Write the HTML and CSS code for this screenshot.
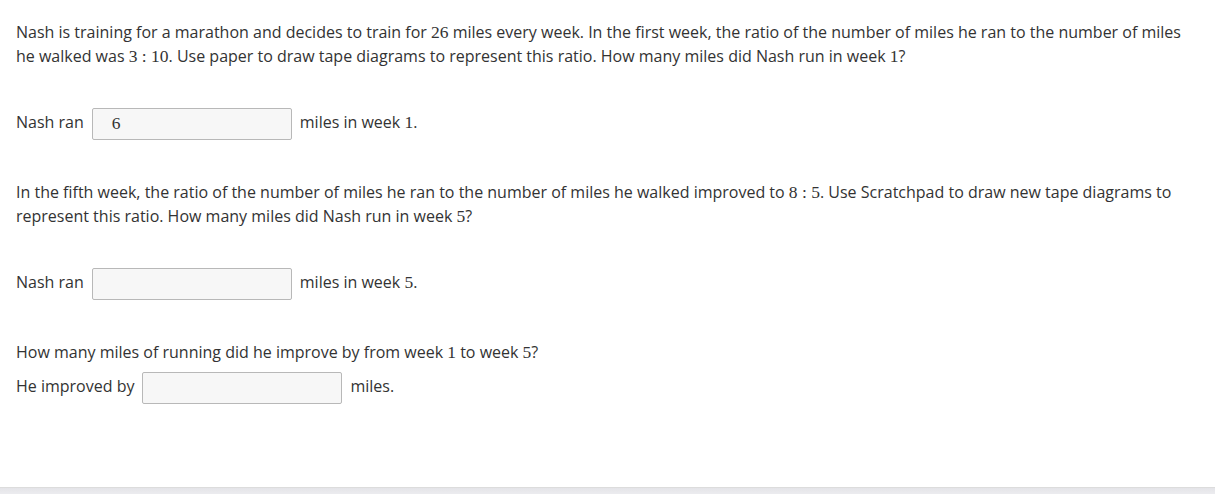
FILE: index.html
```html
<!DOCTYPE html>
<html>
<head>
<meta charset="utf-8">
<link rel="stylesheet" href="styles.css">
</head>
<body>
<main class="question">
  <p class="para">Nash is training for a marathon and decides to train for <span class="m">26</span> miles every week. In the first week, the ratio of the number of miles he ran to the number of miles he walked was <span class="m">3 : 10</span>. Use paper to draw tape diagrams to represent this ratio. How many miles did Nash run in week <span class="m">1</span>?</p>
  <div class="row"><span class="lbl">Nash ran</span><div class="input"><span class="m">6</span></div><span class="lbl">miles in week <span class="m">1</span>.</span></div>
  <p class="para">In the fifth week, the ratio of the number of miles he ran to the number of miles he walked improved to <span class="m">8 : 5</span>. Use Scratchpad to draw new tape diagrams to represent this ratio. How many miles did Nash run in week <span class="m">5</span>?</p>
  <div class="row"><span class="lbl">Nash ran</span><div class="input"></div><span class="lbl">miles in week <span class="m">5</span>.</span></div>
  <p class="para tight">How many miles of running did he improve by from week <span class="m">1</span> to week <span class="m">5</span>?</p>
  <div class="row"><span class="lbl">He improved by</span><div class="input"></div><span class="lbl">miles.</span></div>
</main>
<div class="footer"></div>
</body>
</html>
```
FILE: styles.css
```css
html, body {
  margin: 0;
  padding: 0;
  background: #fff;
  height: 100%;
}
body {
  display: flex;
  flex-direction: column;
  font-family: "Open Sans", "Noto Sans", sans-serif;
  font-size: 16px;
  color: #333;
}
.question {
  flex: 1;
  padding: 20px 16px 0 16px;
  display: flex;
  flex-direction: column;
}
.para {
  margin: 0 0 40px 0;
  line-height: 24px;
}
.para.tight {
  margin-bottom: 8px;
}
.row {
  display: flex;
  align-items: center;
  gap: 8px;
  height: 32px;
  margin-bottom: 40px;
}
.lbl {
  line-height: 24px;
  margin-bottom: 4px;
}
.input {
  box-sizing: border-box;
  width: 200px;
  height: 32px;
  border: 1px solid #b8b8b8;
  border-radius: 2px;
  background: #f7f7f7;
  padding-left: 19px;
  display: flex;
  align-items: center;
}
.m {
  font-family: "Liberation Serif", "DejaVu Serif", serif;
  font-size: 17.5px;
  line-height: 1;
}
.footer {
  height: 6px;
  border-top: 1px solid #dcdcdc;
  background: linear-gradient(#e4e4e8, #ececef);
}
```
